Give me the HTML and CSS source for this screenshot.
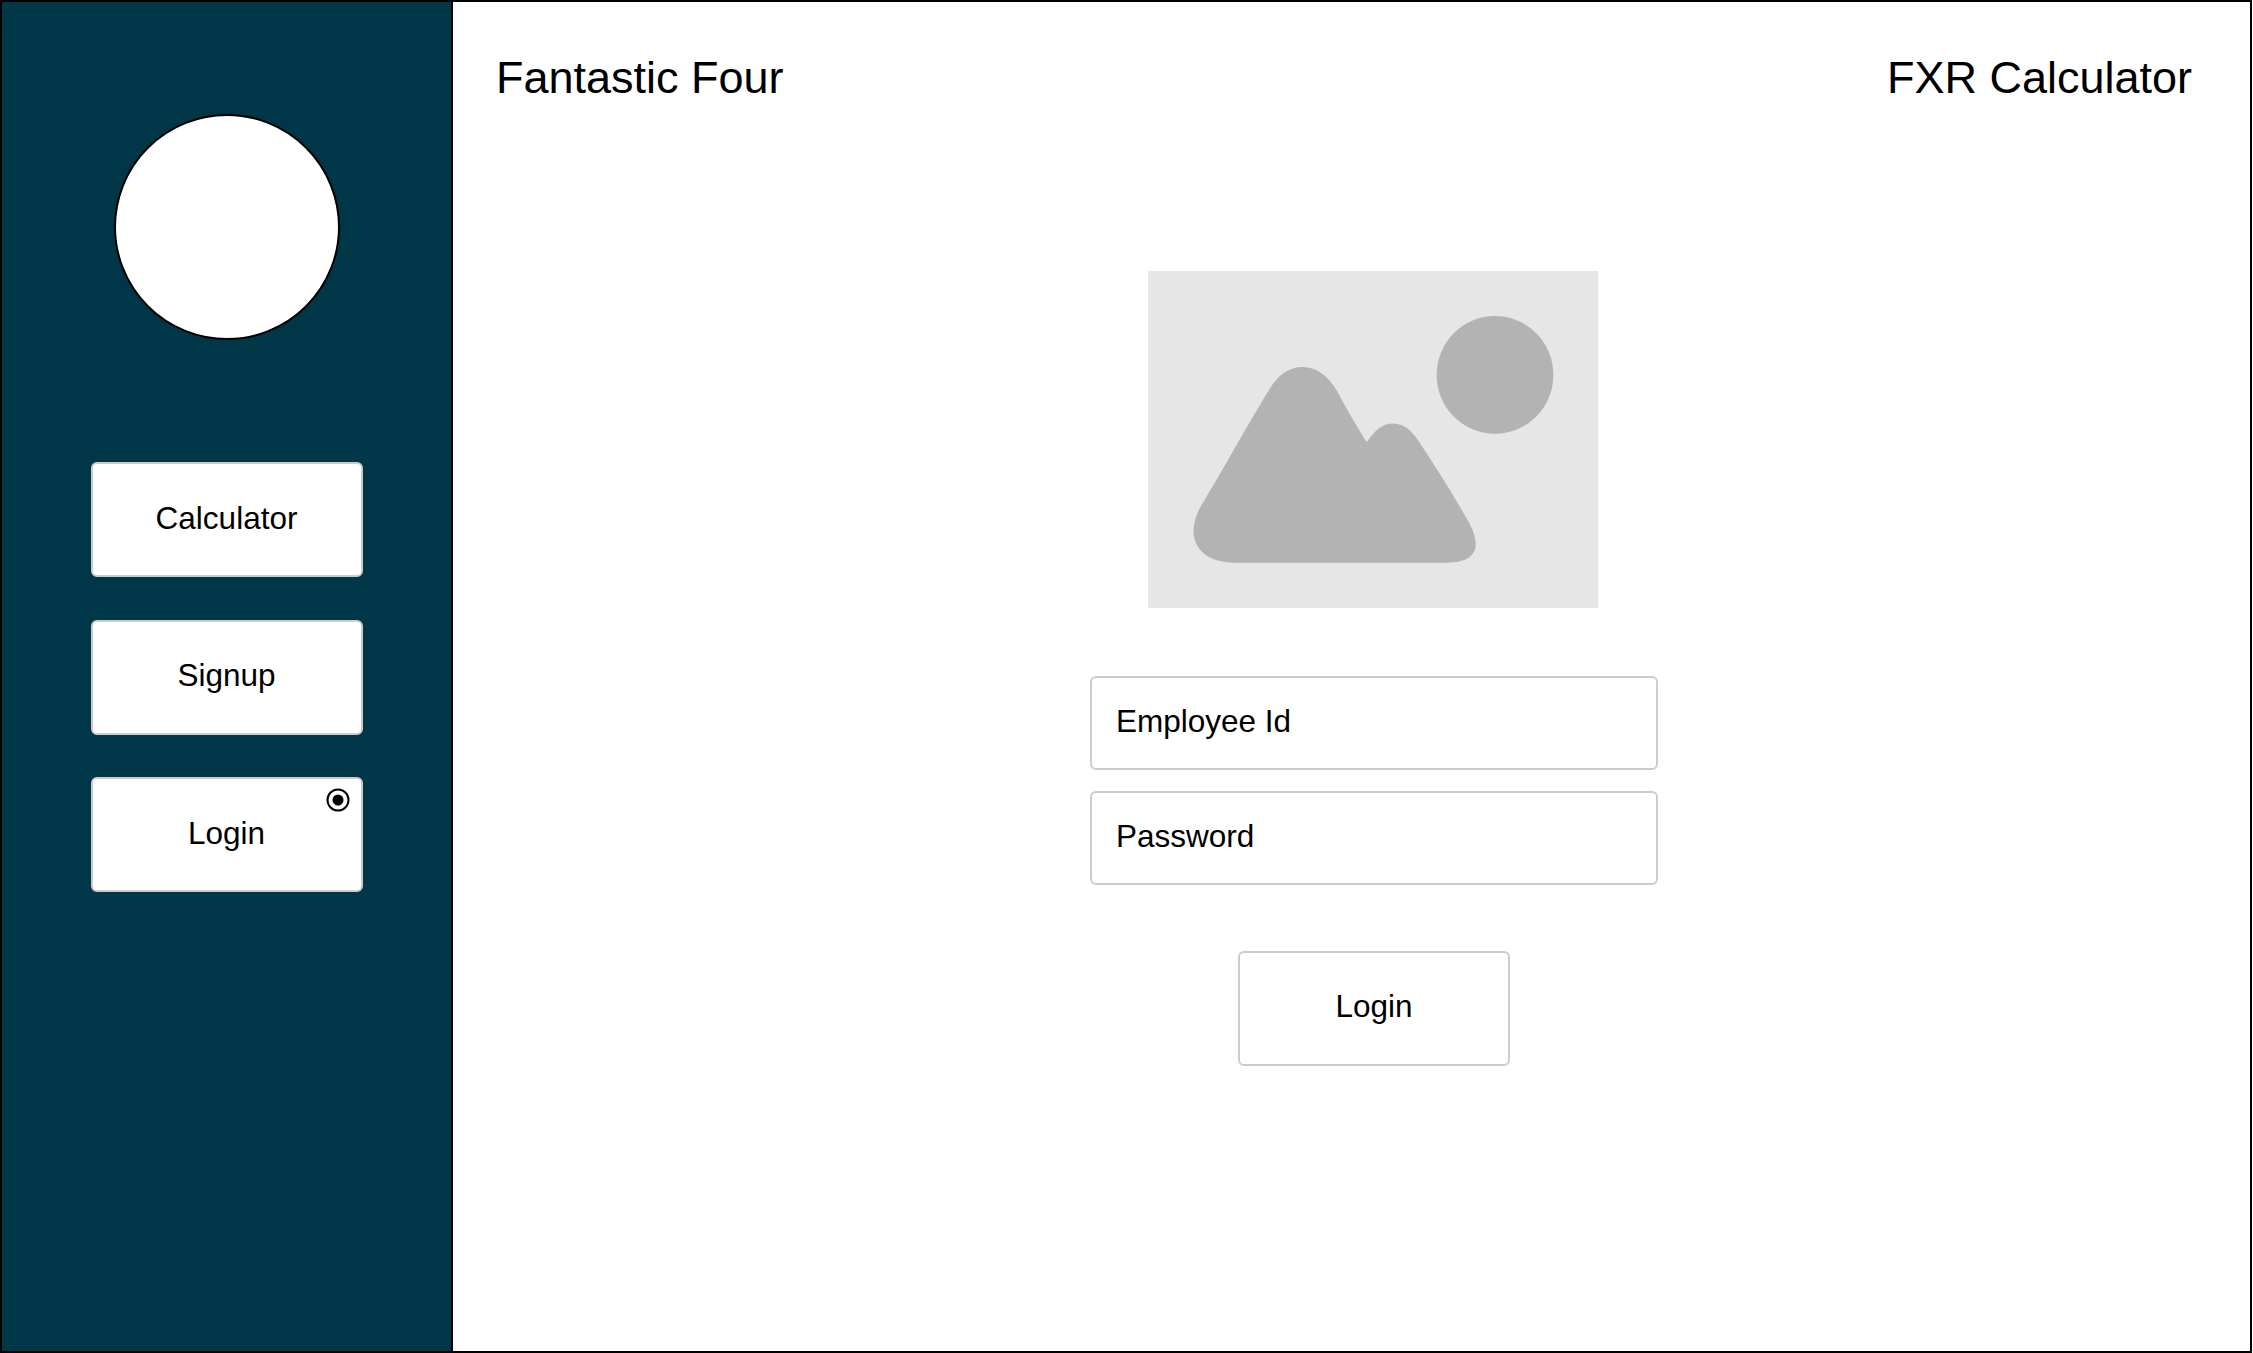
FILE: index.html
```html
<!DOCTYPE html>
<html lang="en">
<head>
<meta charset="utf-8">
<title>FXR Calculator - Login</title>
<link rel="stylesheet" href="styles.css">
</head>
<body>
<div class="frame">
  <aside class="sidebar">
    <div class="avatar"></div>
    <nav class="nav">
      <a class="box nav-item">Calculator</a>
      <a class="box nav-item">Signup</a>
      <a class="box nav-item">Login
        <svg class="radio" viewBox="0 0 24 24" aria-hidden="true"><circle cx="12" cy="12" r="10.5" fill="#fff" stroke="#000" stroke-width="2"/><circle cx="12" cy="12" r="5.5" fill="#000"/></svg>
      </a>
    </nav>
  </aside>
  <main class="main">
    <header class="header">
      <span>Fantastic Four</span>
      <span>FXR Calculator</span>
    </header>
    <section class="login">
      <svg class="placeholder" viewBox="54 63 1350 1012" preserveAspectRatio="none" aria-hidden="true">
        <rect x="54" y="63" width="1350" height="1012" fill="#e6e6e6"/>
        <ellipse cx="1095" cy="375" rx="175" ry="177" fill="#b3b3b3"/>
        <path fill="#b3b3b3" d="M710 577C735 540 760 520 790 521C820 522 842 540 860 565C920 655 970 735 1015 815C1052 880 1050 939 950 939L315 939C200 938 160 860 215 765C290 640 350 530 420 415C445 374 478 351 517 351C565 351 600 385 622 425C650 478 680 530 710 577Z"/>
      </svg>
      <div class="fields">
        <div class="box field">Employee Id</div>
        <div class="box field">Password</div>
      </div>
      <button class="box submit">Login</button>
    </section>
  </main>
</div>
</body>
</html>
```
FILE: styles.css
```css
* { box-sizing: border-box; }
html, body { margin: 0; padding: 0; background: #fff; }
body { font-family: "Liberation Sans", Arial, sans-serif; color: #000; }
.frame {
  display: flex;
  width: 2252px;
  height: 1353px;
  border: 2px solid #000;
  overflow: hidden;
}
.sidebar {
  flex: 0 0 451px;
  display: flex;
  flex-direction: column;
  align-items: center;
  padding-top: 112px;
  background: #003748;
  border-right: 2px solid #000;
}
.avatar {
  width: 226px;
  height: 226px;
  border-radius: 50%;
  background: #fff;
  border: 2px solid #000;
}
.nav {
  display: flex;
  flex-direction: column;
  gap: 42.5px;
  margin-top: 122px;
}
.box {
  display: flex;
  align-items: center;
  background: #fff;
  border: 2px solid #ccc;
  border-radius: 6px;
  font-size: 31.5px;
  color: #000;
  font-family: inherit;
  padding-bottom: 3px;
}
.nav-item {
  position: relative;
  justify-content: center;
  width: 272px;
  height: 115px;
}
.radio {
  position: absolute;
  top: 9px;
  right: 11px;
  width: 24px;
  height: 24px;
}
.main {
  flex: 1;
  display: flex;
  flex-direction: column;
  padding: 0 58px 0 43px;
}
.header {
  display: flex;
  justify-content: space-between;
  align-items: center;
  height: 152px;
  font-size: 45px;
}
.login {
  display: flex;
  flex-direction: column;
  align-items: center;
  margin-left: 58px;
  padding-top: 117px;
}
.placeholder {
  display: block;
  width: 450px;
  height: 337px;
}
.fields {
  display: flex;
  flex-direction: column;
  gap: 21px;
  margin: 68px 0 0 2px;
}
.field {
  width: 568px;
  height: 94px;
  padding: 0 24px 3px;
}
.submit {
  justify-content: center;
  width: 272px;
  height: 115px;
  margin: 66px 0 0 2px;
  padding: 0 0 5px;
}
```
